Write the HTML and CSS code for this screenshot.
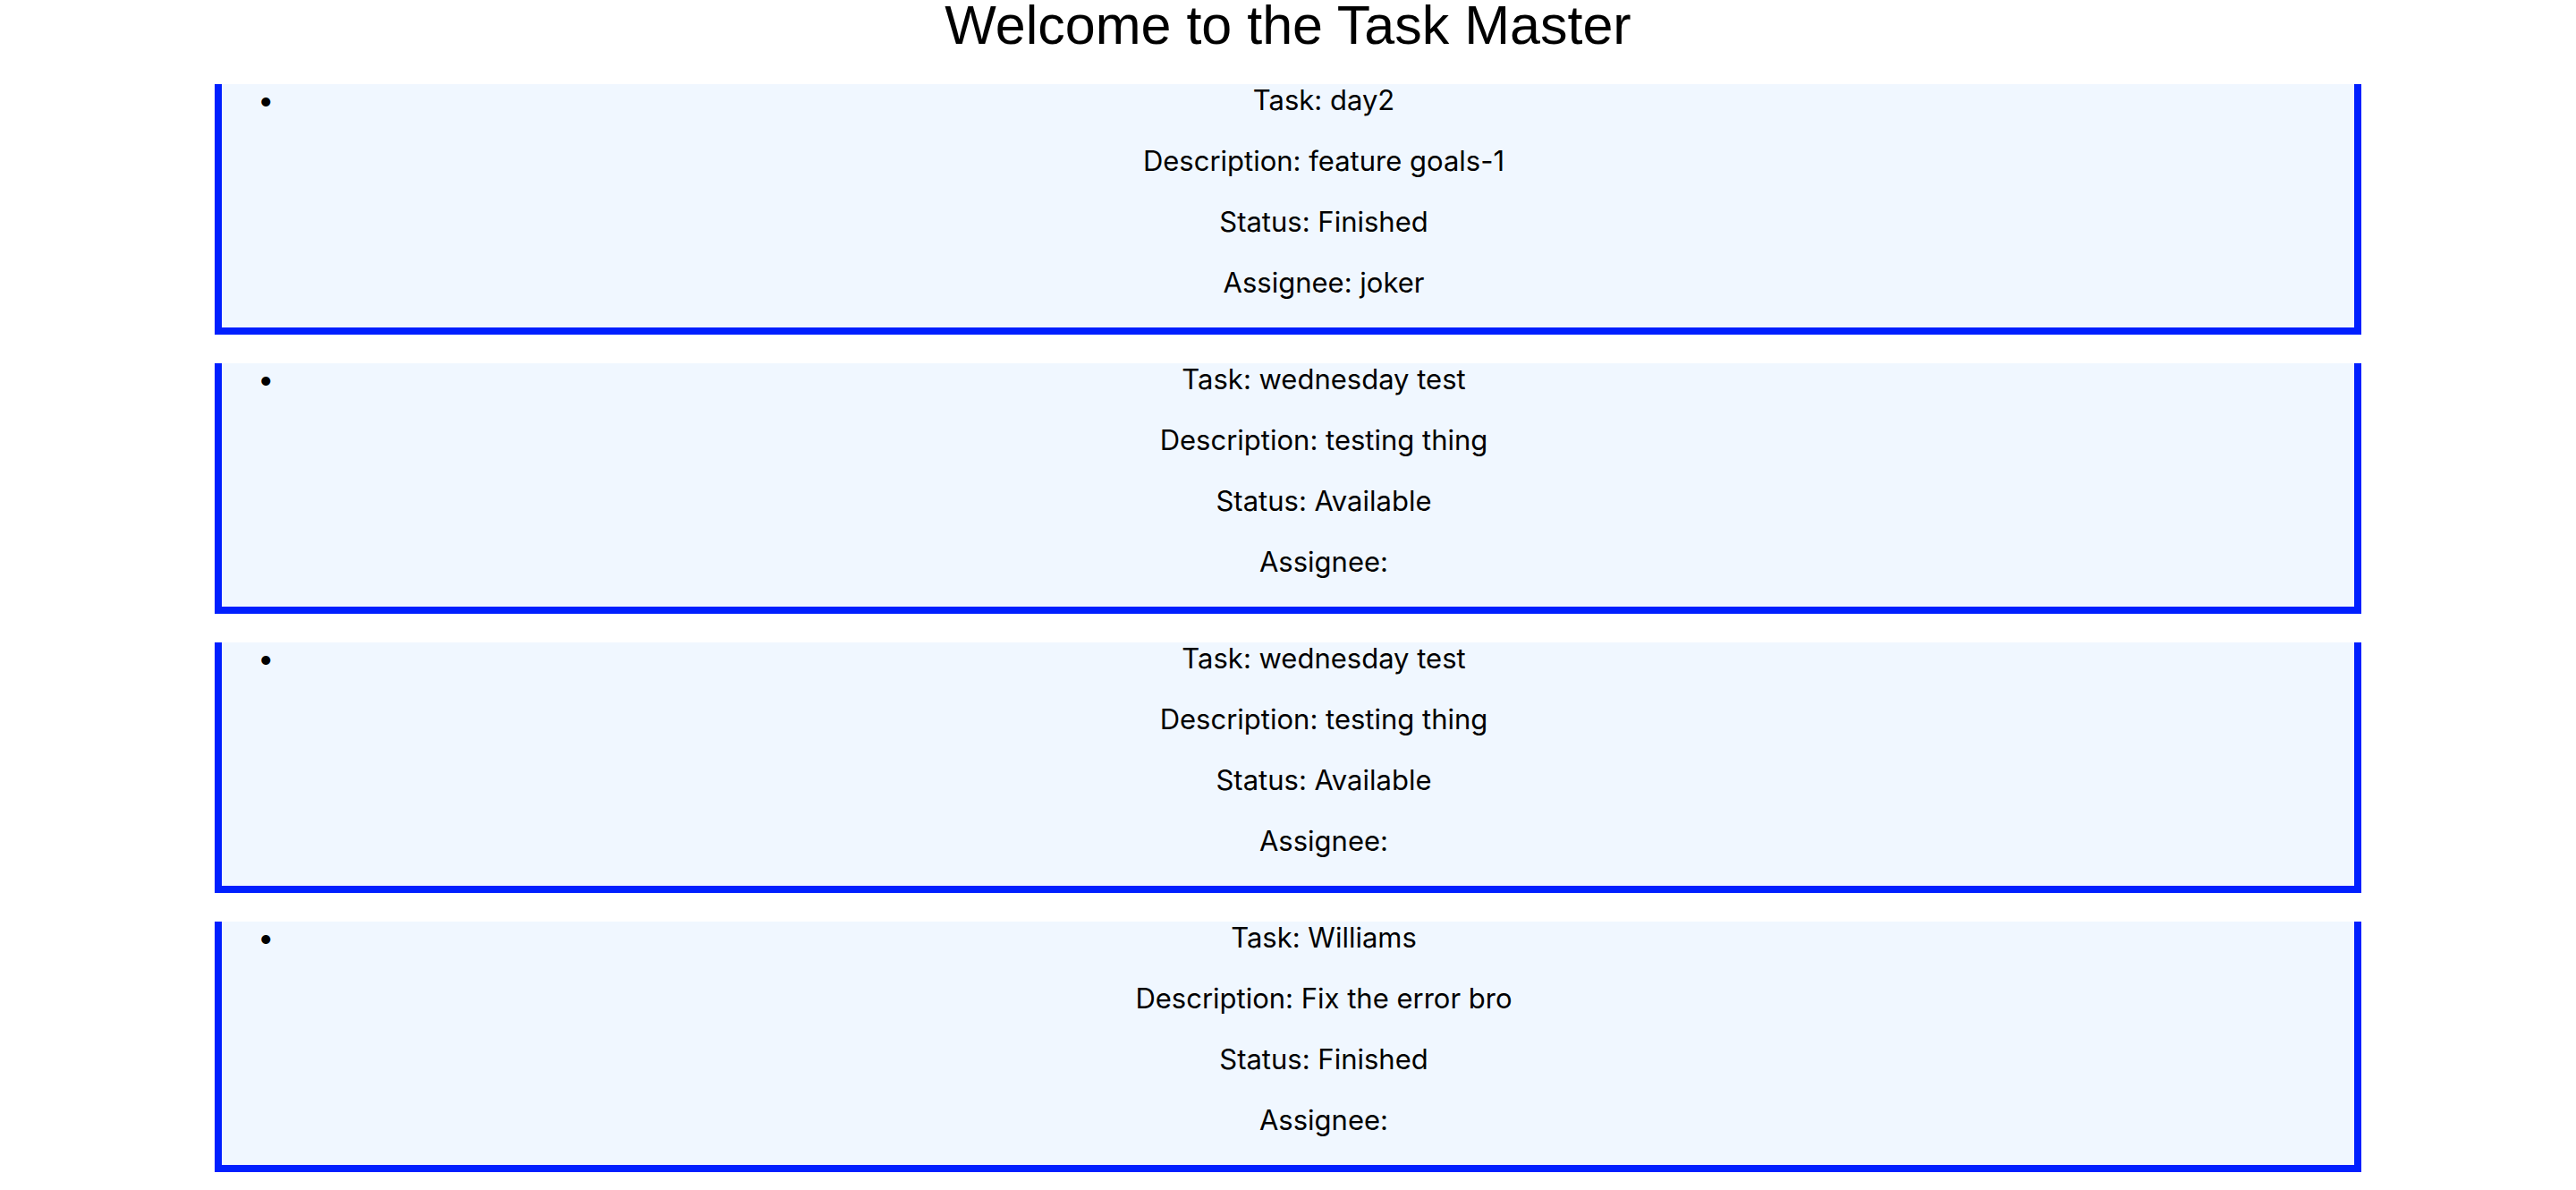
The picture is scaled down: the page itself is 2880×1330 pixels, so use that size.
FILE: index.html
```html
<!DOCTYPE html>
<html lang="en">
<head>
<meta charset="utf-8">
<title>Task Master</title>
<link rel="stylesheet" href="styles.css">
</head>
<body>
  <h1 class="title">Welcome to the Task Master</h1>
  <div class="tasks">
    <div class="task">
      <ul class="task-list">
        <li class="task-item">
          <p class="task-line">Task: day2</p>
          <p class="task-line">Description: feature goals-1</p>
          <p class="task-line">Status: Finished</p>
          <p class="task-line">Assignee: joker</p>
        </li>
      </ul>
    </div>
    <div class="task">
      <ul class="task-list">
        <li class="task-item">
          <p class="task-line">Task: wednesday test</p>
          <p class="task-line">Description: testing thing</p>
          <p class="task-line">Status: Available</p>
          <p class="task-line">Assignee: </p>
        </li>
      </ul>
    </div>
    <div class="task">
      <ul class="task-list">
        <li class="task-item">
          <p class="task-line">Task: wednesday test</p>
          <p class="task-line">Description: testing thing</p>
          <p class="task-line">Status: Available</p>
          <p class="task-line">Assignee: </p>
        </li>
      </ul>
    </div>
    <div class="task">
      <ul class="task-list">
        <li class="task-item">
          <p class="task-line">Task: Williams</p>
          <p class="task-line">Description: Fix the error bro</p>
          <p class="task-line">Status: Finished</p>
          <p class="task-line">Assignee: </p>
        </li>
      </ul>
    </div>
  </div>
</body>
</html>
```

FILE: styles.css
```css
html, body {
  background: #ffffff;
}

body {
  margin: 0;
  color: #000000;
  font-family: Inter, "Noto Sans", sans-serif;
}

.title {
  margin: 0 0 38px;
  font-family: "Liberation Sans", Arial, sans-serif;
  font-size: 61px;
  font-weight: 400;
  line-height: 56px;
  text-align: center;
}

.tasks {
  width: 2400px;
  margin: 0 auto;
}

.task {
  margin: 32px 0;
  background: #f0f7ff;
  border: 8px solid #001fff;
  border-top: none;
}

.task-list {
  margin: 32px 0;
  padding-left: 80px;
  list-style: disc;
}

.task-item {
  font-size: 31px;
  line-height: 36px;
}

.task-item::marker {
  content: "\2022\2002\2009";
  font-size: 32px;
}

.task-line {
  margin: 32px 0;
  line-height: 36px;
  text-align: center;
}
```
